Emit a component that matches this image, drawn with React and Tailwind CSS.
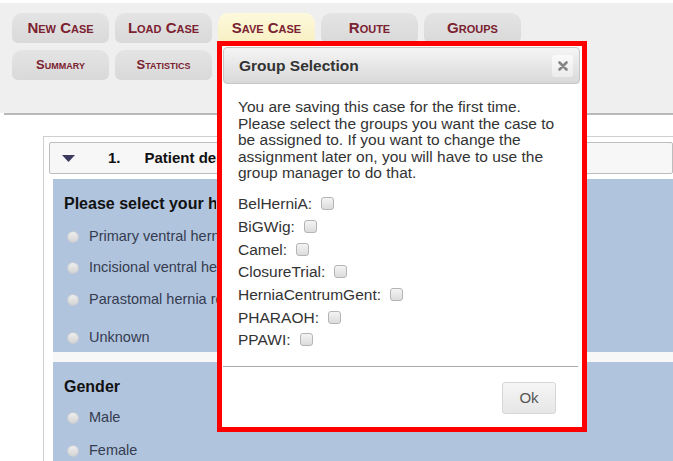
import React from "react";

const topTabs = [
  { label: "New Case" },
  { label: "Load Case" },
  { label: "Save Case", active: true },
  { label: "Route" },
  { label: "Groups" },
];
const lowTabs = [{ label: "Summary" }, { label: "Statistics" }];

const groups = [
  "BelHerniA",
  "BiGWig",
  "Camel",
  "ClosureTrial",
  "HerniaCentrumGent",
  "PHARAOH",
  "PPAWI",
];

function Tab({ label, active, small }) {
  return (
    <div
      className={
        "w-[97px] h-[30px] rounded-t-[10px] rounded-b-[6px] flex items-center justify-center font-bold text-[#7b2230] [font-variant:small-caps] " +
        (small ? "text-[13px] " : "text-[15px] ") +
        (active
          ? "bg-gradient-to-b from-[#fdf9dc] to-[#f8efc2]"
          : "bg-gradient-to-b from-[#e4e4e4] to-[#d9d9d9]")
      }
    >
      {label}
    </div>
  );
}

// labels behind the dialog are clipped where the dialog starts
function Radio({ label, className = "" }) {
  return (
    <div className={"flex items-center h-[20px] " + className}>
      <span className="shrink-0 w-[12px] h-[12px] rounded-full bg-gradient-to-b from-[#eeeeee] to-[#d4d4d4] border border-[#c8ccd4] ml-[14px] mr-[10px]" />
      <span className="max-w-[128px] overflow-hidden text-[14.5px] text-[#353c4f] whitespace-nowrap">{label}</span>
    </div>
  );
}

function CheckRow({ name }) {
  return (
    <div className="flex items-center h-[22.7px] text-[15.5px] text-[#333]">
      <span>{name}:</span>
      <span className="ml-[9px] w-[13px] h-[13px] rounded-[3px] border border-[#b4b4b4] bg-gradient-to-b from-[#f4f4f4] to-[#dcdcdc]" />
    </div>
  );
}

export default function App() {
  return (
    <div className="relative w-[673px] h-[461px] overflow-hidden bg-white font-['Liberation_Sans',Arial,sans-serif]">
      {/* application header with tab buttons */}
      <div className="mt-[3px] h-[110px] bg-[#efefef] pt-[10px] pl-[12px] flex flex-col gap-[7px]">
        <div className="flex gap-[6px]">
          {topTabs.map((t) => (
            <Tab key={t.label} {...t} />
          ))}
        </div>
        <div className="flex gap-[6px]">
          {lowTabs.map((t) => (
            <Tab key={t.label} {...t} small />
          ))}
        </div>
      </div>
      <div className="ml-[4px] h-[2px] bg-[#b9b9b9]" />

      {/* form panel */}
      <div className="mt-[21px] ml-[43px] border-l border-t border-[#cfcfcf] pt-[5px] pl-[5px]">
        <div className="h-[32px] border border-[#bdbdbd] rounded-[2px] bg-[#f7f7f7] flex items-center text-[15px] font-bold text-[#111]">
          <svg width="13" height="7" viewBox="0 0 13 7" className="ml-[12px] shrink-0">
            <polygon points="0,0 13,0 6.5,7" fill="#3b3a5e" />
          </svg>
          <span className="ml-[33px]">1.</span>
          <span className="ml-[24px] w-[73px] overflow-hidden whitespace-nowrap">Patient demographics</span>
        </div>

        <div className="mt-[5px] ml-[4px]">
          <div className="h-[173px] bg-[#b0c4de] pt-[15px]">
            <div className="ml-[11px] w-[152px] overflow-hidden text-[16px] font-bold text-[#111] h-[20px] leading-[20px] whitespace-nowrap">
              Please select your hernia type
            </div>
            <Radio label="Primary ventral hernia" className="mt-[13px]" />
            <Radio label="Incisional ventral hernia" className="mt-[11px]" />
            <Radio label="Parastomal hernia repair" className="mt-[12px]" />
            <Radio label="Unknown" className="mt-[18px]" />
          </div>
          <div className="h-[10px] bg-[#f7f7f7]" />
          <div className="h-[120px] bg-[#b0c4de] pt-[15px]">
            <div className="pl-[11px] text-[16px] font-bold text-[#111] h-[20px] leading-[20px]">
              Gender
            </div>
            <Radio label="Male" className="mt-[11px]" />
            <Radio label="Female" className="mt-[13px]" />
          </div>
        </div>
      </div>

      {/* group selection dialog */}
      <div className="absolute left-[217px] top-[41px] w-[370px] h-[391px] border-[5px] border-[#ff0000] bg-white">
        <div className="h-full flex flex-col p-[1px]">
          <div className="h-[37px] rounded-[4px] border border-[#c6c6c6] bg-gradient-to-b from-[#f5f5f5] to-[#d9d9d9] flex items-center justify-between pl-[15px] pr-[6px] mr-[1px]">
            <span className="text-[15.5px] font-bold text-[#333]">Group Selection</span>
            <span className="w-[21px] h-[22px] rounded-[3px] bg-gradient-to-b from-[#fafafa] to-[#ececec] flex items-center justify-center">
              <svg width="10" height="10" viewBox="0 0 10 10">
                <path d="M1.5 1.5 L8.5 8.5 M8.5 1.5 L1.5 8.5" stroke="#858585" strokeWidth="2.6" strokeLinecap="round" />
              </svg>
            </span>
          </div>

          <div className="pl-[15px] pt-[15px] text-[#333]">
            <p className="text-[15.5px] leading-[16.5px] w-[330px]">
              You are saving this case for the first time. Please select the groups you want the case to be assigned to. If you want to change the assignment later on, you will have to use the group manager to do that.
            </p>
            <div className="mt-[11px]">
              {groups.map((g) => (
                <CheckRow key={g} name={g} />
              ))}
            </div>
          </div>

          <div className="mt-[15px] mr-[3px] border-t border-[#a9a9a9] flex justify-end pt-[15px] pr-[22px]">
            <button className="w-[54px] h-[32px] rounded-[3px] border border-[#d6d6d6] bg-gradient-to-b from-[#f6f6f6] to-[#e6e6e6] text-[15px] text-[#555]">
              Ok
            </button>
          </div>
        </div>
      </div>
    </div>
  );
}
